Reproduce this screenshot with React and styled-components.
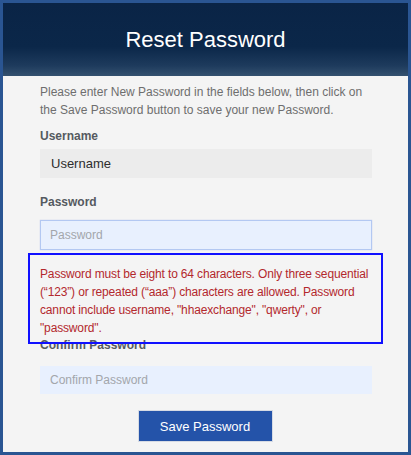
import React from "react";
import styled, { createGlobalStyle } from "styled-components";

const Global = createGlobalStyle`
  html, body { margin: 0; padding: 0; background: #f4f4f4; }
  body { font-family: "Liberation Sans", Arial, sans-serif; }
  * { box-sizing: border-box; }
`;

const Frame = styled.div`
  width: 411px;
  height: 455px;
  border: 3px solid #2a5592;
  background: #f4f4f4;
  display: flex;
  flex-direction: column;
  overflow: hidden;
`;

const Header = styled.header`
  height: 73px;
  flex: none;
  display: flex;
  align-items: center;
  justify-content: center;
  background: linear-gradient(to bottom, #0a2446 0%, #0b2749 60%, #1e3b5d 86%, #34516f 100%);
`;

const Title = styled.h1`
  margin: 0;
  font-size: 22px;
  font-weight: 400;
  color: #ffffff;
`;

const Body = styled.main`
  padding: 8px 36px 0 37px;
  display: flex;
  flex-direction: column;
`;

const Intro = styled.p`
  margin: 0;
  font-size: 12px;
  line-height: 17.5px;
  color: #6e6e6e;
`;

const Label = styled.label`
  display: block;
  font-size: 12px;
  font-weight: 700;
  line-height: 17px;
  color: #555a60;
  margin-top: ${(p) => p.$mt}px;
`;

const Field = styled.div`
  height: ${(p) => p.$h || 29}px;
  margin-top: ${(p) => p.$mt}px;
  display: flex;
  align-items: center;
  padding-left: ${(p) => (p.$filled ? 10 : 9)}px;
  background: ${(p) => (p.$filled ? "#ececec" : "#e8f0fe")};
  border: 1px solid ${(p) => (p.$focused ? "#b3c8f2" : "transparent")};
  box-shadow: ${(p) => (p.$focused ? "0 0 1px rgba(120,150,230,0.5)" : "none")};
  font-size: ${(p) => (p.$filled ? 13 : 12)}px;
  color: ${(p) => (p.$filled ? "#2e2e2e" : "#a3a6ab")};
`;

const ErrorText = styled.p`
  position: relative;
  margin: 15px 0 0 0;
  font-size: 12px;
  letter-spacing: -0.15px;
  line-height: 18px;
  color: #b3282d;

  &::after {
    content: "";
    position: absolute;
    top: -12px;
    left: -12px;
    right: -11px;
    bottom: -7px;
    border: 2.5px solid #1010ff;
    pointer-events: none;
  }
`;

const ButtonRow = styled.div`
  display: flex;
  justify-content: center;
  margin-top: 16px;
`;

const SaveButton = styled.button`
  width: 135px;
  height: 32px;
  margin-left: -2px;
  background: #2453a9;
  border: 1px solid #d6dbe4;
  color: #ffffff;
  font-family: "Liberation Sans", Arial, sans-serif;
  font-size: 13px;
  cursor: pointer;
`;

export default function App() {
  return (
    <>
      <Global />
      <Frame>
        <Header>
          <Title>Reset Password</Title>
        </Header>
        <Body>
          <Intro>
            Please enter New Password in the fields below, then click on the Save Password
            button to save your new Password.
          </Intro>
          <Label $mt={9}>Username</Label>
          <Field $filled $mt={4}>Username</Field>
          <Label $mt={16}>Password</Label>
          <Field $focused $mt={9} $h={30}>Password</Field>
          <ErrorText>
            Password must be eight to 64 characters. Only three sequential (“123”) or repeated
            (“aaa”) characters are allowed. Password cannot include username, "hhaexchange",
            "qwerty", or "password".
          </ErrorText>
          <Label $mt={0}>Confirm Password</Label>
          <Field $mt={12} $h={28}>Confirm Password</Field>
          <ButtonRow>
            <SaveButton>Save Password</SaveButton>
          </ButtonRow>
        </Body>
      </Frame>
    </>
  );
}
